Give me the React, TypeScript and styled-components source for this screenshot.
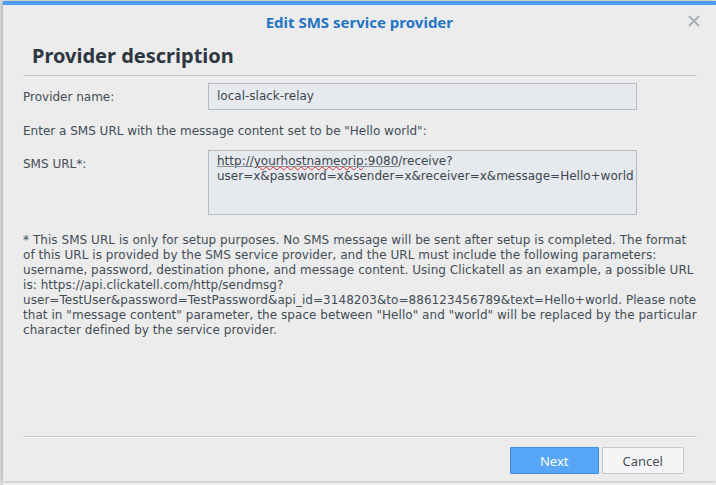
import styled, { createGlobalStyle } from 'styled-components';

const GlobalStyle = createGlobalStyle`
  html, body {
    margin: 0;
    padding: 0;
    background: #d9dcdf;
  }
  body {
    width: 716px;
    height: 485px;
    overflow: hidden;
  }
`;

const Screen = styled.div`
  width: 716px;
  height: 485px;
  box-sizing: border-box;
  padding: 1px 4px 4px 3px;
  display: flex;
  background: linear-gradient(to right, #dadde0 0, #dadde0 3px, #f2f2f2 3px);
`;

const Dialog = styled.div`
  flex: 1;
  display: flex;
  flex-direction: column;
  background: #ececec;
  border-top: 4px solid #4d9cf3;
  box-shadow: 0 0 4px rgba(0, 0, 0, 0.35);
  font-family: 'DejaVu Sans', Verdana, sans-serif;
  font-size: 12px;
  color: #434d57;
`;

const Header = styled.div`
  position: relative;
  height: 32px;
  display: flex;
  align-items: center;
  justify-content: center;
`;

const Title = styled.div`
  font-family: 'Noto Sans', sans-serif;
  font-weight: bold;
  font-size: 15px;
  color: #2574c4;
  margin-top: 2px;
`;

const Close = styled.button`
  position: absolute;
  right: 14px;
  top: 8px;
  width: 16px;
  height: 16px;
  padding: 0;
  border: none;
  background: none;
  display: flex;
  align-items: center;
  justify-content: center;
`;

const Body = styled.div`
  flex: 1;
  padding: 0 19px 0 20px;
  display: flex;
  flex-direction: column;
`;

const Heading = styled.h2`
  margin: 0;
  padding: 4px 0 0 9px;
  height: 39px;
  box-sizing: border-box;
  border-bottom: 1px solid #c9c9c9;
  font-family: 'Noto Sans', sans-serif;
  font-size: 20px;
  font-weight: bold;
  color: #2d3742;
  line-height: 30px;
`;

const Row = styled.div<{ $top: number }>`
  display: flex;
  align-items: flex-start;
  margin-top: ${(p) => p.$top}px;
`;

const Label = styled.div`
  width: 185px;
  padding-top: 7px;
  line-height: 15px;
`;

const Input = styled.div`
  width: 429px;
  height: 27px;
  box-sizing: border-box;
  border: 1px solid #b7bbbf;
  background: #e6eaee;
  padding: 0 8px;
  line-height: 25px;
  font-size: 12px;
  color: #3c4650;
`;

const TextArea = styled.div`
  width: 429px;
  height: 65px;
  box-sizing: border-box;
  border: 1px solid #b7bbbf;
  background: #e6eaee;
  padding: 3px 8px;
  line-height: 15px;
  color: #3c4650;
`;

const Line = styled.span`
  display: block;
  white-space: nowrap;
`;

const Link = styled.span`
  text-decoration: underline;
  text-decoration-color: #8a8f95;
`;

const Misspelled = styled.span`
  text-decoration: underline wavy #e03030;
  text-decoration-thickness: 1px;
`;

const Paragraph = styled.p<{ $top: number }>`
  margin: ${(p) => p.$top}px 0 0;
  line-height: 15px;
`;

const Note = styled.div`
  margin: 18px 0 0;
  line-height: 15px;
  letter-spacing: 0.05px;
`;

const Footer = styled.div`
  margin: 0 19px 0 20px;
  border-top: 1px solid #c8c8c8;
  box-shadow: inset 0 1px 0 #f6f6f6;
  padding: 10px 13px 7px 0;
  display: flex;
  justify-content: flex-end;
  gap: 3px;
`;

const Button = styled.button<{ $primary?: boolean }>`
  height: 27px;
  width: ${(p) => (p.$primary ? 89 : 82)}px;
  box-sizing: border-box;
  border: 1px solid ${(p) => (p.$primary ? '#3d8ee6' : '#c6c8cc')};
  background: ${(p) => (p.$primary ? '#56a5f7' : '#f5f5f8')};
  color: ${(p) => (p.$primary ? '#ffffff' : '#46505a')};
  font-family: 'Noto Sans', sans-serif;
  font-size: 13px;
  border-radius: 1px;
  padding: 0;
`;

const noteLines = [
  '* This SMS URL is only for setup purposes. No SMS message will be sent after setup is completed. The format',
  'of this URL is provided by the SMS service provider, and the URL must include the following parameters:',
  'username, password, destination phone, and message content. Using Clickatell as an example, a possible URL',
  'is: https://api.clickatell.com/http/sendmsg?',
  'user=TestUser&password=TestPassword&api_id=3148203&to=886123456789&text=Hello+world. Please note',
  'that in "message content" parameter, the space between "Hello" and "world" will be replaced by the particular',
  'character defined by the service provider.',
];

export default function App() {
  return (
    <>
      <GlobalStyle />
      <Screen>
        <Dialog>
          <Header>
            <Title>Edit SMS service provider</Title>
            <Close aria-label="Close">
              <svg width="12" height="12" viewBox="0 0 12 12">
                <path d="M1 1L11 11M11 1L1 11" stroke="#a8b0b8" strokeWidth="2" />
              </svg>
            </Close>
          </Header>
          <Body>
            <Heading>Provider description</Heading>
            <Row $top={7}>
              <Label>Provider name:</Label>
              <Input>local-slack-relay</Input>
            </Row>
            <Paragraph $top={14}>Enter a SMS URL with the message content set to be "Hello world":</Paragraph>
            <Row $top={11}>
              <Label>SMS URL*:</Label>
              <TextArea>
                <Line>
                  <Link>
                    http://<Misspelled>yourhostnameorip</Misspelled>:9080
                  </Link>
                  /receive?
                </Line>
                <Line>user=x&amp;password=x&amp;sender=x&amp;receiver=x&amp;message=Hello+world</Line>
              </TextArea>
            </Row>
            <Note>
              {noteLines.map((l) => (
                <Line key={l}>{l}</Line>
              ))}
            </Note>
          </Body>
          <Footer>
            <Button $primary>Next</Button>
            <Button>Cancel</Button>
          </Footer>
        </Dialog>
      </Screen>
    </>
  );
}
